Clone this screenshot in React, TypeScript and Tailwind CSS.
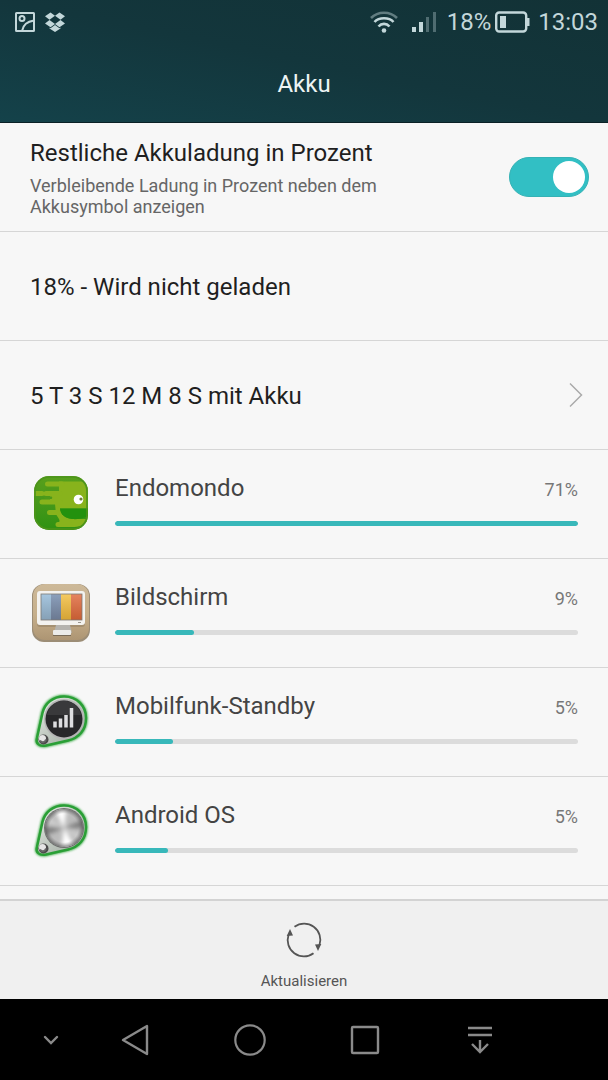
import { useId, useState } from 'react';
import type { ReactNode } from 'react';

function EndomondoIcon() {
  return (
    <svg viewBox="0 0 60 60" className="size-15" aria-hidden="true">
      <defs>
        <clipPath id="endo-clip">
          <rect x="4" y="2" width="54" height="54" rx="15" />
        </clipPath>
        <linearGradient id="endo-bg" x1="0" y1="0" x2="0" y2="1">
          <stop offset="0" stopColor="#58a01c" />
          <stop offset="0.500" stopColor="#45981a" />
          <stop offset="1" stopColor="#2f9212" />
        </linearGradient>
      </defs>
      <g clipPath="url(#endo-clip)">
        <rect x="4" y="2" width="54" height="54" fill="url(#endo-bg)" />
        <path
          d="M29 7.500H50C54 7.500 58 10 58 16V34.500H30C31 42 37 45 44 45H58V47C53 53 46 53 40 53H30C27 53 26 50 29 48C31 46 27 43 26 40L25 30H20V17.500H29Z"
          fill="#88b31c"
        />
        <path
          d="M17.500 10H32M4 19.500H12M16 19.500H30M12 28H30M19.500 38.500H28M28 50.500H40"
          fill="none"
          stroke="#88b31c"
          strokeWidth="5"
          strokeLinecap="round"
        />
        <path d="M17 15H27M15 23.800H21" stroke="#4d9a1a" strokeWidth="2.500" strokeLinecap="round" />
        <path d="M30 34.500H58V42C52 45 46 45.500 42 45C35 44 30.500 41 30 34.500Z" fill="#23910e" />
      </g>
      <rect x="5" y="3" width="52" height="52" rx="14" fill="none" stroke="#4d941b" strokeWidth="1.600" />
      <circle cx="48.500" cy="25.500" r="4.800" fill="#fff" />
      <circle cx="51" cy="25" r="1.600" fill="#6f7f3a" />
    </svg>
  );
}

function ScreenIcon() {
  return (
    <svg viewBox="0 0 60 60" className="size-15" aria-hidden="true">
      <defs>
        <linearGradient id="scr-bg" x1="0" y1="0" x2="0" y2="1">
          <stop offset="0" stopColor="#cdb999" />
          <stop offset="0.550" stopColor="#c6af8b" />
          <stop offset="1" stopColor="#ad9573" />
        </linearGradient>
        <linearGradient id="scr-shade" x1="0" y1="0" x2="0" y2="1">
          <stop offset="0" stopColor="#fff" stopOpacity="0.200" />
          <stop offset="1" stopColor="#53301b" stopOpacity="0.180" />
        </linearGradient>
      </defs>
      <rect x="2" y="1" width="58" height="58" rx="12" fill="#9c8d76" />
      <rect x="3" y="1" width="56" height="56" rx="12" fill="url(#scr-bg)" />
      <rect x="7" y="9" width="48" height="35" rx="3" fill="#8e7b62" opacity="0.500" />
      <path d="M26 42h14l2 8H24Z" fill="#b5b3ae" />
      <rect x="23" y="47" width="18" height="5" rx="1" fill="#ecebe8" />
      <path d="M23 52.500h18" stroke="#796b57" />
      <rect x="7" y="8" width="48" height="34" rx="3" fill="#f3f2ef" />
      <rect x="11" y="11" width="10" height="26" fill="#91b9d8" />
      <rect x="21" y="11" width="10" height="26" fill="#7089ab" />
      <rect x="31" y="11" width="10" height="26" fill="#f2bd3b" />
      <rect x="41" y="11" width="11" height="26" fill="#df6638" />
      <rect x="11" y="11" width="41" height="26" fill="url(#scr-shade)" />
      <rect x="11" y="11" width="41" height="26" fill="none" stroke="#7d7973" strokeWidth="0.800" />
      <path d="M48 39.500h3" stroke="#99948d" />
    </svg>
  );
}

function KeyringIcon({ id, children }: { id: string; children: ReactNode }) {
  const drop = 'M7 46 12.500 21C15 11 23 4.500 34 4.500C47 4.500 56 14 56 26C56 38 49 46 38 48.500L16 53.500C9 55 5.500 51 7 46Z';
  return (
    <svg viewBox="0 0 60 60" className="size-15" aria-hidden="true">
      <defs>
        <filter id={`${id}-glow`} x="-20%" y="-20%" width="140%" height="140%">
          <feGaussianBlur stdDeviation="1.300" />
        </filter>
        <linearGradient id={`${id}-rim`} x1="0" y1="0" x2="1" y2="1">
          <stop offset="0" stopColor="#e9efe8" />
          <stop offset="1" stopColor="#98a399" />
        </linearGradient>
      </defs>
      <path d={drop} fill="#66b96b" stroke="#3fae49" strokeWidth="3.500" filter={`url(#${id}-glow)`} />
      <path d={drop} fill={`url(#${id}-rim)`} stroke="#2a9f36" strokeWidth="2.500" />
      {children}
      <circle cx="13.500" cy="47.500" r="5" fill="#4a4a4a" />
      <circle cx="12.500" cy="46.500" r="3.500" fill="#e5e5e5" />
      <path d="M10 48.500c2 3 5 2 6-1" fill="none" stroke="#656565" strokeWidth="2" />
    </svg>
  );
}

function StandbyIcon() {
  return (
    <KeyringIcon id="standby">
      <circle cx="34" cy="27" r="20" fill="#b5b5b5" />
      <circle cx="34" cy="27" r="18.500" fill="#272729" />
      <path d="M17 23c5-21 31-17 34 0Z" fill="#464648" opacity="0.600" />
      <path d="M25 35.500v-6M30.500 35.500v-9M36 35.500V23M41.500 35.500V16" stroke="#dedee0" strokeWidth="3.500" />
    </KeyringIcon>
  );
}

function AndroidOsIcon() {
  return (
    <KeyringIcon id="android">
      <defs>
        <radialGradient id="metal-edge">
          <stop offset="0.750" stopColor="#777" stopOpacity="0" />
          <stop offset="1" stopColor="#555" stopOpacity="0.700" />
        </radialGradient>
        <filter id="metal-soft" x="-10%" y="-10%" width="120%" height="120%">
          <feGaussianBlur stdDeviation="2" />
        </filter>
        <clipPath id="metal-clip">
          <circle cx="34" cy="27" r="19" />
        </clipPath>
      </defs>
      <circle cx="34" cy="27" r="20" fill="#6f716f" />
      <g clipPath="url(#metal-clip)">
        <rect x="14" y="7" width="40" height="40" fill="#bcbcbc" />
        <g filter="url(#metal-soft)">
          <path d="M34 27 22 4H37ZM34 27 31 51H48Z" fill="#fff" />
          <path d="M34 27 11 26V36ZM34 27 57 17V27Z" fill="#7c7c7c" />
          <path d="M34 27 12 12V20ZM34 27 56 36V44Z" fill="#d2d2d2" />
        </g>
      </g>
      <circle cx="34" cy="27" r="19" fill="url(#metal-edge)" />
    </KeyringIcon>
  );
}

const apps = [
  { name: 'Endomondo', percent: 71, bar: 100, icon: <EndomondoIcon /> },
  { name: 'Bildschirm', percent: 9, bar: 17, icon: <ScreenIcon /> },
  { name: 'Mobilfunk-Standby', percent: 5, bar: 12.5, icon: <StandbyIcon /> },
  { name: 'Android OS', percent: 5, bar: 11.5, icon: <AndroidOsIcon /> },
];

function StatusBar() {
  return (
    <div className="flex h-11 items-center justify-between pr-2.5 pl-3.5 text-2xl text-[#c3d7da]">
      <div className="flex items-center gap-2">
        <svg viewBox="0 0 22 22" className="size-[22px]" fill="none" stroke="currentColor" strokeWidth="2" aria-hidden="true">
          <rect x="2" y="2" width="18" height="18" rx="0.500" />
          <circle cx="8" cy="7.500" r="2.500" />
          <path d="M8 20c1-6 5-9.500 12-10.500" />
        </svg>
        <svg viewBox="0 0 22 20" className="h-5 w-[22px]" fill="currentColor" aria-hidden="true">
          <path d="m6.500 .5 4.500 3.300L5.500 7.800 1 4.300ZM15.500.5 11 3.800l5.500 4L21 4.300ZM5.500 8l5.500 4-4.500 3.300L1 11.600ZM16.500 8 11 12l4.500 3.300L21 11.600ZM5.500 15.600l1 .7L11 13l4.500 3.300 1-.7v1L11 20l-5.500-3.400Z" />
        </svg>
      </div>
      <div className="flex items-center">
        <svg viewBox="0 0 30 24" className="h-6 w-[30px]" fill="none" stroke="currentColor" strokeWidth="2.600" aria-hidden="true">
          <path d="M2 8C9 1 21 1 28 8" opacity="0.450" />
          <path d="M5.500 12C10 7 20 7 24.500 12M9.500 16.500c3-3.500 8-3.500 11 0" />
          <circle cx="15" cy="20.500" r="2.300" fill="currentColor" stroke="none" />
        </svg>
        <svg viewBox="0 0 26 22" className="ml-3 h-[22px] w-[26px]" fill="currentColor" aria-hidden="true">
          <path d="M1 16h4v5H1ZM8 11h4v10H8Z" />
          <path d="M15 6h3v15h-3ZM22 1h3v20h-3Z" opacity="0.350" />
        </svg>
        <span className="ml-2.5">18%</span>
        <svg viewBox="0 0 35 22" className="ml-1 h-[22px] w-[35px]" aria-hidden="true">
          <rect x="1.200" y="1.500" width="30" height="19" rx="3" fill="none" stroke="currentColor" strokeWidth="2.400" />
          <rect x="5" y="5" width="6" height="12" fill="currentColor" />
          <path d="M32 7h2.500v8H32Z" fill="currentColor" />
        </svg>
        <span className="ml-2">13:03</span>
      </div>
    </div>
  );
}

const rowClass = 'flex h-[109px] items-center border-b border-[#d6d6d6] pl-[30px]';

export default function App() {
  const [showPercent, setShowPercent] = useState(true);
  const switchId = useId();

  return (
    <div className="flex min-h-screen flex-col bg-[#f7f7f7] font-[Roboto,'Liberation_Sans',sans-serif] text-[#1f1f1f]">
      <header className="bg-linear-to-tr from-[#14424a] via-[#13363c] to-[#123236]">
        <StatusBar />
        <h1 className="flex h-[79px] items-center justify-center border-b border-[#0b2126] pt-0.5 text-2xl text-[#edf4f4]">Akku</h1>
      </header>

      <main className="flex-1">
        <div className={`${rowClass} justify-between pr-[19px]`}>
          <label htmlFor={switchId}>
            <span className="block text-2xl leading-8">Restliche Akkuladung in Prozent</span>
            <span className="mt-1.5 block max-w-[400px] text-lg leading-[21px] text-[#666]">
              Verbleibende Ladung in Prozent neben dem Akkusymbol anzeigen
            </span>
          </label>
          <input
            id={switchId}
            type="checkbox"
            role="switch"
            checked={showPercent}
            onChange={(e) => setShowPercent(e.target.checked)}
            className="flex h-10 w-20 shrink-0 appearance-none items-center rounded-full border border-[#cfcfcf] bg-[#d5d5d5] px-[3px] before:size-8 before:rounded-full before:bg-white checked:justify-end checked:border-[#35b2b5] checked:bg-[#32bfc4]"
          />
        </div>

        <div className={rowClass}>
          <p className="pt-0.5 text-2xl">18% - Wird nicht geladen</p>
        </div>

        <a href="#verlauf" className={`${rowClass} justify-between pr-[25px]`}>
          <span className="pt-0.5 text-2xl">5 T 3 S 12 M 8 S mit Akku</span>
          <svg viewBox="0 0 14 26" className="h-[26px] w-3.5" fill="none" stroke="#aaa" strokeWidth="1.500" aria-hidden="true">
            <path d="M1 1.500 12.500 13 1 24.500" />
          </svg>
        </a>

        <ul>
          {apps.map((app) => (
            <li key={app.name} className={`${rowClass} gap-[25px] pr-[30px]`}>
              {app.icon}
              <div className="flex-1 pb-2.5">
                <div className="flex items-center justify-between">
                  <span className="text-2xl text-[#444]">{app.name}</span>
                  <span className="pt-1 text-lg text-[#777]">{app.percent}%</span>
                </div>
                <div className="mt-[17px] h-[5px] overflow-hidden rounded-full bg-[#dcdcdc]">
                  <div className="h-full rounded-full bg-[#38b8ba]" style={{ width: `${app.bar}%` }} />
                </div>
              </div>
            </li>
          ))}
        </ul>
      </main>

      <div className="flex h-[100px] justify-center border-t-2 border-[#d3d3d3] bg-[#f0f0f0]">
        <button type="button" className="flex flex-col items-center pt-5 text-[#555]">
          <svg viewBox="0 0 38 38" className="size-[38px]" fill="none" stroke="currentColor" strokeWidth="1.800" aria-hidden="true">
            <path d="M9.500 5.800A16.200 16.200 0 0 1 34.500 24M28.500 32.200A16.200 16.200 0 0 1 3.500 14" />
            <path d="m5 8 3 6.500-6.300.5ZM33 30l-3-6.500 6.300-.5Z" fill="currentColor" stroke="none" />
          </svg>
          <span className="mt-2.5 text-[15px] leading-6">Aktualisieren</span>
        </button>
      </div>

      <nav className="flex h-[81px] items-center bg-black pl-8 text-[#8a8a8a]">
        <button type="button" aria-label="Leiste ausblenden" className="mr-[46px]">
          <svg viewBox="0 0 38 38" className="size-[38px]" fill="none" stroke="currentColor" strokeWidth="2.400" strokeLinecap="round">
            <path d="m13 16 6 6 6-6" />
          </svg>
        </button>
        <div className="flex gap-[77px]">
          <button type="button" aria-label="Zurück">
            <svg viewBox="0 0 38 38" className="size-[38px]" fill="none" stroke="currentColor" strokeWidth="2.400" strokeLinejoin="round">
              <path d="M31 5v28L7 19Z" />
            </svg>
          </button>
          <button type="button" aria-label="Startbildschirm">
            <svg viewBox="0 0 38 38" className="size-[38px]" fill="none" stroke="currentColor" strokeWidth="2.200">
              <circle cx="19" cy="19" r="14.700" />
            </svg>
          </button>
          <button type="button" aria-label="Letzte Apps">
            <svg viewBox="0 0 38 38" className="size-[38px]" fill="none" stroke="currentColor" strokeWidth="2.400">
              <rect x="6" y="6" width="26" height="26" rx="1" />
            </svg>
          </button>
          <button type="button" aria-label="Benachrichtigungen">
            <svg viewBox="0 0 38 38" className="size-[38px]" fill="none" stroke="currentColor" strokeWidth="2.400">
              <path d="M7 7h24M7 14h24M19 19v12M11 23l8 8 8-8" />
            </svg>
          </button>
        </div>
      </nav>
    </div>
  );
}
